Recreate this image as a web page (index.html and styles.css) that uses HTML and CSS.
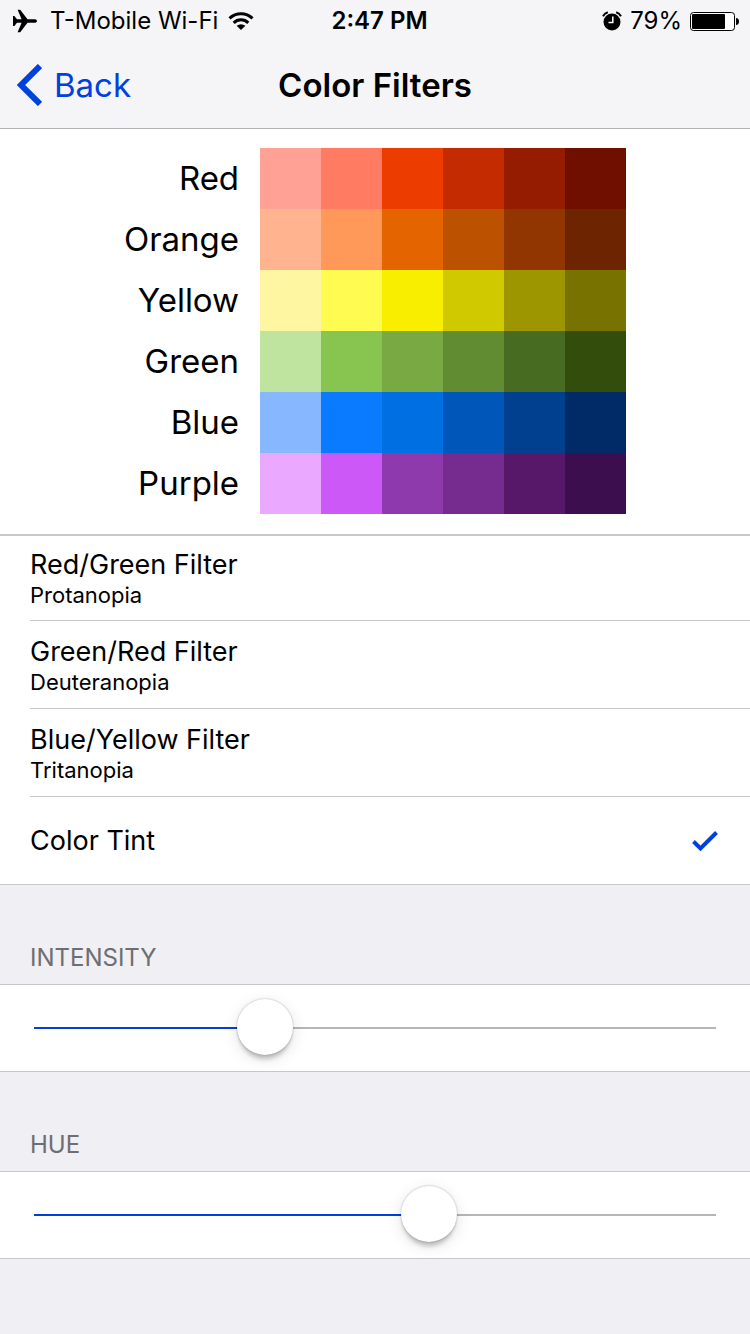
FILE: index.html
```html
<!DOCTYPE html>
<html lang="en">
<head>
    <meta charset="UTF-8">
    <meta name="viewport" content="width=device-width, initial-scale=1.0">
    <title>Color Filters</title>
    <link rel="stylesheet" href="styles.css">
</head>
<body>
    <header class="header">
        <div class="status-bar">
            <div class="status-left">
                <svg width="28" height="24" viewBox="0 0 28 24" aria-hidden="true">
                    <path d="M25 12c0 1.2-1.2 1.8-2.800 1.800H15.500L8.200 23.200H5.600L9.600 13.800H5L2.400 17H1V7h1.400L5 10.200H9.600L5.600.8H8.200L15.500 10.200H22.200C23.800 10.200 25 10.800 25 12z"/>
                </svg>
                <span class="carrier">T-Mobile Wi-Fi</span>
                <svg width="26" height="20" viewBox="0 0 26 20" aria-hidden="true">
                    <path d="M1.500 7.300A16.500 16.500 0 0 1 24.500 7.300" fill="none" stroke="#000" stroke-width="3"/>
                    <path d="M5.700 11.800A10.500 10.500 0 0 1 20.300 11.800" fill="none" stroke="#000" stroke-width="3"/>
                    <path d="M13 19L8.600 14.800Q13 11.500 17.400 14.800z"/>
                </svg>
            </div>
            <time class="clock">2:47 PM</time>
            <div class="status-right">
                <svg width="20" height="20" viewBox="0 0 20 20" aria-hidden="true">
                    <circle cx="10" cy="11" r="8.500"/>
                    <path d="M1 5.200A8 8 0 0 1 5.800 1.200M19 5.200A8 8 0 0 0 14.200 1.200" fill="none" stroke="#000" stroke-width="2"/>
                    <path d="M10.800 5.500V11.600H6.500" fill="none" stroke="#fff" stroke-width="1.500"/>
                </svg>
                <span class="percent">79%</span>
                <svg width="49" height="20" viewBox="0 0 49 20" aria-hidden="true">
                    <rect x=".5" y="1.500" width="44" height="18" rx="3" fill="#fff" stroke="#000"/>
                    <rect x="2" y="3" width="33" height="15" rx="1"/>
                    <path d="M46 7c2 0 3 1.500 3 3.500s-1 3.500-3 3.500z"/>
                </svg>
            </div>
        </div>
        <nav class="nav-bar">
            <a class="back" href="#">
                <svg width="26" height="42" viewBox="0 0 26 42" aria-hidden="true">
                    <path d="M24 2L5 21L24 40" fill="none" stroke="currentColor" stroke-width="6"/>
                </svg>
                Back
            </a>
            <h1>Color Filters</h1>
        </nav>
    </header>

    <main>
        <section class="chart">
            <table class="swatches">
                <tr class="red"><th scope="row">Red</th><td></td><td></td><td></td><td></td><td></td><td></td></tr>
                <tr class="orange"><th scope="row">Orange</th><td></td><td></td><td></td><td></td><td></td><td></td></tr>
                <tr class="yellow"><th scope="row">Yellow</th><td></td><td></td><td></td><td></td><td></td><td></td></tr>
                <tr class="green"><th scope="row">Green</th><td></td><td></td><td></td><td></td><td></td><td></td></tr>
                <tr class="blue"><th scope="row">Blue</th><td></td><td></td><td></td><td></td><td></td><td></td></tr>
                <tr class="purple"><th scope="row">Purple</th><td></td><td></td><td></td><td></td><td></td><td></td></tr>
            </table>
        </section>

        <form>
            <div class="filters">
                <label class="filter">
                    <span class="filter-text">
                        <span class="filter-name">Red/Green Filter</span>
                        <span class="filter-type">Protanopia</span>
                    </span>
                    <input type="radio" name="filter" value="protanopia">
                </label>
                <label class="filter">
                    <span class="filter-text">
                        <span class="filter-name">Green/Red Filter</span>
                        <span class="filter-type">Deuteranopia</span>
                    </span>
                    <input type="radio" name="filter" value="deuteranopia">
                </label>
                <label class="filter">
                    <span class="filter-text">
                        <span class="filter-name">Blue/Yellow Filter</span>
                        <span class="filter-type">Tritanopia</span>
                    </span>
                    <input type="radio" name="filter" value="tritanopia">
                </label>
                <label class="filter">
                    <span class="filter-text">
                        <span class="filter-name">Color Tint</span>
                    </span>
                    <input type="radio" name="filter" value="tint" checked>
                    <svg class="check" width="26" height="22" viewBox="0 0 26 22" aria-hidden="true">
                        <path d="M1.500 11.500L8.500 18.500L24.500 2.500" fill="none" stroke="currentColor" stroke-width="4"/>
                    </svg>
                </label>
            </div>

            <label class="group-title" for="intensity">INTENSITY</label>
            <div class="slider-row">
                <input type="range" id="intensity" min="0" max="1000" value="324" style="--fill: 32.4%">
            </div>

            <label class="group-title" for="hue">HUE</label>
            <div class="slider-row">
                <input type="range" id="hue" min="0" max="1000" value="586" style="--fill: 58.6%">
            </div>
        </form>
    </main>

    <script>
        // Keep the blue part of the track in step with the thumb
        document.querySelectorAll('input[type="range"]').forEach((slider) => {
            slider.addEventListener('input', () => {
                slider.style.setProperty('--fill', slider.value / 10 + '%');
            });
        });
    </script>
</body>
</html>
```
FILE: styles.css
```css
* {
    margin: 0;
    padding: 0;
    box-sizing: border-box;
}

body {
    font-family: 'Inter', -apple-system, BlinkMacSystemFont, sans-serif;
    background: #efeff4;
    color: #000;
    min-height: 100vh;
}

svg {
    display: block;
    flex-shrink: 0;
}

.header {
    background: #f5f5f7;
    border-bottom: 1px solid #b2b2b2;
}

.status-bar {
    display: grid;
    grid-template-columns: 1fr auto 1fr;
    align-items: center;
    padding: 0 11px 0 12px;
    font-size: 24px;
    line-height: 42px;
}

.status-left,
.status-right {
    display: flex;
    align-items: center;
}

.status-left {
    gap: 10px;
}

.status-right {
    justify-content: flex-end;
    gap: 8px;
}

.clock {
    padding-left: 8px;
    font-weight: 600;
}

.nav-bar {
    display: grid;
    grid-template-columns: 1fr auto 1fr;
    align-items: center;
    height: 86px;
    padding: 0 16px;
}

.back {
    display: flex;
    align-items: center;
    gap: 12px;
    font-size: 33px;
    color: #0040dd;
    text-decoration: none;
}

.nav-bar h1 {
    font-size: 33px;
    font-weight: 600;
}

.chart {
    padding: 19px 0 20px;
    background: #fff;
    border-bottom: 2px solid #c8c7cc;
}

.swatches {
    margin: 0 auto;
    border-collapse: collapse;
}

.swatches th {
    width: 136px;
    padding-right: 21px;
    font-size: 33px;
    font-weight: 400;
    line-height: 61px;
    text-align: right;
}

.swatches td {
    width: 61px;
    height: 61px;
}

.red td:nth-child(2) { background: #ffa195; }
.red td:nth-child(3) { background: #ff7b62; }
.red td:nth-child(4) { background: #ec3c00; }
.red td:nth-child(5) { background: #c42b00; }
.red td:nth-child(6) { background: #961c00; }
.red td:nth-child(7) { background: #700e00; }

.orange td:nth-child(2) { background: #ffb38f; }
.orange td:nth-child(3) { background: #ff9959; }
.orange td:nth-child(4) { background: #e46500; }
.orange td:nth-child(5) { background: #bc5100; }
.orange td:nth-child(6) { background: #913600; }
.orange td:nth-child(7) { background: #6c2500; }

.yellow td:nth-child(2) { background: #fff6a2; }
.yellow td:nth-child(3) { background: #fffb50; }
.yellow td:nth-child(4) { background: #f7ee00; }
.yellow td:nth-child(5) { background: #d0c900; }
.yellow td:nth-child(6) { background: #9e9600; }
.yellow td:nth-child(7) { background: #787200; }

.green td:nth-child(2) { background: #bfe49f; }
.green td:nth-child(3) { background: #88c550; }
.green td:nth-child(4) { background: #79a943; }
.green td:nth-child(5) { background: #628c32; }
.green td:nth-child(6) { background: #486b22; }
.green td:nth-child(7) { background: #324d0c; }

.blue td:nth-child(2) { background: #86b7ff; }
.blue td:nth-child(3) { background: #0a7aff; }
.blue td:nth-child(4) { background: #006fe2; }
.blue td:nth-child(5) { background: #0057b9; }
.blue td:nth-child(6) { background: #00408e; }
.blue td:nth-child(7) { background: #002b67; }

.purple td:nth-child(2) { background: #eaa8ff; }
.purple td:nth-child(3) { background: #cd58f8; }
.purple td:nth-child(4) { background: #8f3aac; }
.purple td:nth-child(5) { background: #762b8f; }
.purple td:nth-child(6) { background: #58186a; }
.purple td:nth-child(7) { background: #3d0e4d; }

.filters {
    padding-left: 30px;
    background: #fff;
    border-bottom: 1px solid #c8c7cc;
}

.filter {
    display: flex;
    align-items: center;
    justify-content: space-between;
    height: 88px;
    padding-right: 32px;
    border-bottom: 1px solid #c8c7cc;
}

.filter:first-child {
    height: 85px;
}

.filter:last-child {
    height: 87px;
    border-bottom: none;
}

/* The check mark stands in for the native radio */
.filter input {
    appearance: none;
}

.check {
    display: none;
    color: #0040dd;
}

.filter input:checked + .check {
    display: block;
}

.filter-text {
    flex: 1;
}

.filter-name,
.filter-type {
    display: block;
}

.filter-name {
    font-size: 27px;
    line-height: 34px;
}

.filter-type {
    font-size: 22px;
    line-height: 26px;
}

.group-title {
    display: block;
    padding: 58px 30px 11px;
    font-size: 24px;
    line-height: 30px;
    color: #6d6d72;
}

.slider-row {
    display: flex;
    align-items: center;
    height: 88px;
    padding: 0 34px;
    background: #fff;
    border-top: 1px solid #c8c7cc;
    border-bottom: 1px solid #c8c7cc;
}

input[type="range"] {
    appearance: none;
    width: 100%;
    height: 56px;
    background: transparent;
}

input[type="range"]::-webkit-slider-runnable-track {
    height: 2px;
    background: linear-gradient(to right, #0040dd var(--fill), #b6b6b7 var(--fill));
}

input[type="range"]::-webkit-slider-thumb {
    appearance: none;
    width: 56px;
    height: 56px;
    margin-top: -28px;
    border-radius: 50%;
    background: #fff;
    box-shadow: 0 0 2px rgba(0,0,0,0.3), 0 6px 4px -2px rgba(0,0,0,0.2), 0 4px 16px rgba(0,0,0,0.12);
}
```
